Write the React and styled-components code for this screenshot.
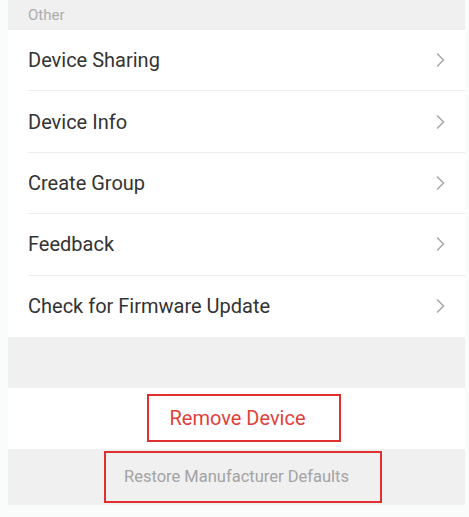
import React from "react";
import styled, { createGlobalStyle } from "styled-components";

const Global = createGlobalStyle`
  html, body { margin: 0; padding: 0; background: #fafbfb; }
  body { font-family: Roboto, "Noto Sans", sans-serif; }
`;

const Panel = styled.div`
  margin-left: 8px;
  width: 457px;
  background: #f0f0f0;
  display: flex;
  flex-direction: column;
`;

const SectionHeader = styled.div`
  height: 30px;
  padding-left: 20px;
  display: flex;
  align-items: center;
  font-size: 15px;
  color: #adadad;
`;

const List = styled.div`
  background: #fff;
  display: flex;
  flex-direction: column;
`;

const Row = styled.div`
  height: 61.4px;
  margin-left: 20px;
  padding-right: 20px;
  box-sizing: border-box;
  display: flex;
  align-items: center;
  justify-content: space-between;
  border-bottom: ${(p) => (p.$last ? "none" : "1px solid #ececec")};
  font-size: 20px;
  color: #333;
`;

const Gap = styled.div`
  height: 51px;
`;

const ActionRow = styled.div`
  height: ${(p) => p.$h}px;
  background: ${(p) => p.$bg};
  display: flex;
  align-items: center;
  justify-content: center;
`;

const Boxed = styled.div`
  box-sizing: border-box;
  width: ${(p) => p.$w}px;
  height: ${(p) => p.$h}px;
  border: 2px solid #e02f2f;
  padding-right: 12px;
  display: flex;
  align-items: center;
  justify-content: center;
  font-size: ${(p) => p.$fs}px;
  color: ${(p) => p.$color};
  margin-left: ${(p) => p.$ml}px;
`;

const Chevron = () => (
  <svg width="10" height="16" viewBox="0 0 10 16">
    <path d="M2 1.5 L8.5 8 L2 14.5" fill="none" stroke="#a8a8a8" strokeWidth="1.5" />
  </svg>
);

const items = [
  "Device Sharing",
  "Device Info",
  "Create Group",
  "Feedback",
  "Check for Firmware Update",
];

export default function App() {
  return (
    <>
      <Global />
      <Panel>
        <SectionHeader>Other</SectionHeader>
        <List>
          {items.map((t, i) => (
            <Row key={t} $last={i === items.length - 1}>
              <span>{t}</span>
              <Chevron />
            </Row>
          ))}
        </List>
        <Gap />
        <ActionRow $h={61} $bg="#fff">
          <Boxed $w={194} $h={48} $fs={20} $color="#e0413b" $ml={14}>
            Remove Device
          </Boxed>
        </ActionRow>
        <ActionRow $h={56} $bg="#f0f0f0">
          <Boxed $w={278} $h={52} $fs={16.5} $color="#a3a3a3" $ml={12}>
            Restore Manufacturer Defaults
          </Boxed>
        </ActionRow>
      </Panel>
    </>
  );
}
